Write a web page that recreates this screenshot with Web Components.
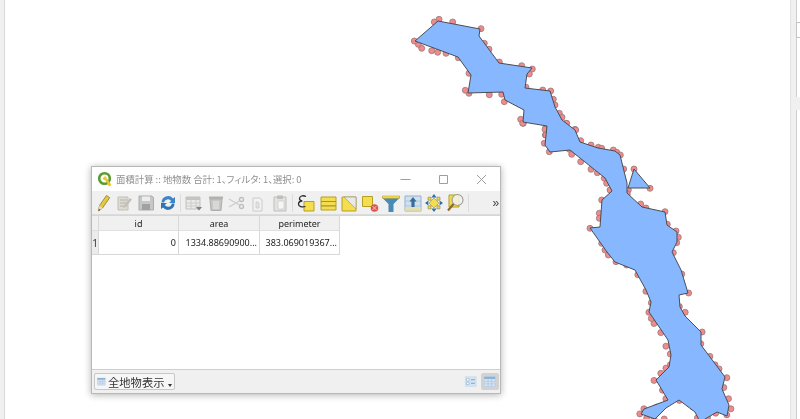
<!DOCTYPE html>
<html lang="ja">
<head>
<meta charset="utf-8">
<title>面積計算</title>
<style>
  html, body { margin: 0; height: 100%; background: #fff; overflow: hidden; }
  body { font-family: "Noto Sans CJK JP", "Noto Sans", sans-serif; }
</style>
</head>
<body>
<map-canvas>
  <attr-window title-text="面積計算 :: 地物数 合計: 1、フィルタ: 1、選択: 0">
    <attr-toolbar></attr-toolbar>
    <attr-table></attr-table>
    <attr-footer></attr-footer>
  </attr-window>
</map-canvas>

<script>
// Icons of the attribute table toolbar, all in a 20x20 box
const ICONS = {
  pencil: `<path d="M4.500 18l1-5.500L12.500 2.500l3.200 2.200L8.500 15z" fill="#e8c93c" stroke="#8f8240" stroke-width=".9"/><path d="M4.500 18l1-5.500 3 2.500z" fill="#e9dcc0"/><path d="M4.500 18l.4-2.200 1.400 1.100z" fill="#444"/>`,
  edit: `<path d="M3 4h10v13H3z" fill="#dedbd3" stroke="#c2bfb7"/><path d="M5 7h7M5 10h7M5 13h7" stroke="#b6b3ac"/><path d="M8 15l1-3 6-7 2 1.600-6 7.400z" fill="#c4c1b8"/>`,
  save: `<path d="M3 3h13l1.500 1.500V17H3z" fill="#c6c7c7" stroke="#acacac"/><path d="M6 3.500h8V8H6z" fill="#ededed"/><path d="M6 11h8v6H6z" fill="#a0a1a1"/>`,
  reload: `<path d="M3.500 9.500A6.500 6.500 0 0 1 15 5.500l2-1.500v6h-6l2.200-2A4 4 0 0 0 6 9.500z" fill="#3d85c6"/><path d="M16.500 10.500A6.500 6.500 0 0 1 5 14.500L3 16v-6h6l-2.200 2a4 4 0 0 0 7.200-1.500z" fill="#2f74b5"/>`,
  newfield: `<path d="M2 4h14v12H2z" fill="#eaeae8" stroke="#c0c0be"/><path d="M2 4h14v3H2z" fill="#c4c4c2"/><path d="M2 10h14M2 13h14M7 7v9M12 7v9" stroke="#c6c6c4" stroke-width=".8"/><path d="M12 14h6l-3 3.500z" fill="#808080"/>`,
  trash: `<path d="M4 6h12l-1 11.500H5z" fill="#c6c6c4" stroke="#aeaeac"/><path d="M3 3.500h14V6H3z" fill="#b2b2b0"/><path d="M8 8v8M10 8v8M12 8v8" stroke="#eaeae8"/>`,
  cut: `<circle cx="14.500" cy="6.500" r="2" fill="none" stroke="#bebebc" stroke-width="1.400"/><circle cx="14.500" cy="13.500" r="2" fill="none" stroke="#bebebc" stroke-width="1.400"/><path d="M2 6l10.500 6M2 14l10.500-6" stroke="#cdcdcb" stroke-width="1.400"/>`,
  copy: `<path d="M5 5h7l2 2v11H5z" fill="#f2f2f0" stroke="#cacac8"/><path d="M8 9v6h3V10l-1-1z" fill="#e2e2e0" stroke="#c6c6c4" stroke-width=".7"/>`,
  paste: `<path d="M4 4h12v14H4z" fill="#e2e2e0" stroke="#bebebc"/><path d="M7 2.500h6V6H7z" fill="#bebebc"/><path d="M8 8h6v8H8z" fill="#f6f6f4" stroke="#c8c8c6" stroke-width=".7"/>`,
  expr: `<path d="M8 8.500h10V18H8z" fill="#f5dd50" stroke="#b59f24"/><path d="M10 3.500C7 2 3.500 3 3.500 5.500c0 1.500 1.200 2.300 2.800 2.500C4 8.200 2.500 9.300 2.500 11c0 2.500 3.500 3.500 7 2.500" fill="none" stroke="#2a2a2a" stroke-width="1.300"/>`,
  selectall: `<path d="M3 4h15v13H3z" fill="#f5dd50" stroke="#b59f24"/><path d="M3 8.500h15M3 12.800h15" stroke="#a8922a" stroke-width="1.200"/>`,
  invert: `<path d="M3 4h14v14H3z" fill="#f5dd50" stroke="#b59f24"/><path d="M5 4h12v12z" fill="#e8e8e8" stroke="#999" stroke-width=".7"/>`,
  deselect: `<path d="M2.500 3.500h10v10h-10z" fill="#f5dd50" stroke="#b59f24"/><circle cx="14.500" cy="15" r="3.800" fill="#d9534f"/><path d="M12.500 13l4 4M16.500 13l-4 4" stroke="#f4c6c4"/>`,
  filter: `<path d="M1.500 3h17v2l-6 6v8h-5v-8l-6-6z" fill="#4a8ab8"/><path d="M1.500 3h17v2.300h-17z" fill="#f5dd50" stroke="#b59f24" stroke-width=".5"/>`,
  movetop: `<path d="M2 3h16v15H2z" fill="#cfe0ef" stroke="#93b1cc"/><path d="M2 14h16v4H2z" fill="#e9e09a" opacity=".7"/><path d="M2 8h16M2 13h16" stroke="#9dbbd4" stroke-width=".6"/><path d="M10 4l3.600 4.500h-2V14H8.400V8.500h-2z" fill="#3a6c99"/>`,
  pan: `<path d="M10 5l5 5-5 5-5-5z" fill="#f5dd50" stroke="#9b8b3a" stroke-width=".6"/><path d="M10 1l2.600 3.400H7.400zM10 19l-2.600-3.400h5.200zM1 10l3.400-2.600v5.200zM19 10l-3.400 2.600V7.400z" fill="#2f6ea8"/><path d="M4 4.200h3v3H4zM13 4.200h3v3h-3zM4 12.800h3v3H4zM13 12.800h3v3h-3z" fill="#f5dd50" stroke="#6e6a30" stroke-width=".5"/>`,
  zoom: `<path d="M4 2h10v12H4z" fill="#f5dd50" stroke="#b59f24"/><circle cx="12.500" cy="7" r="5.500" fill="#f2f2f0" fill-opacity=".85" stroke="#a0a09c" stroke-width="1.200"/><path d="M8.500 11L3 17.500" stroke="#8a6a30" stroke-width="2.200"/>`,
  tableview: `<path d="M1 2h17v15H1z" fill="#d6e4f2" stroke="#b3cbe2"/><path d="M1 2h17v3.600H1z" fill="#8ab3da"/><path d="M1 9.200h17M1 13h17M7 5.600V17M12.500 5.600V17" stroke="#a8c4de"/>`,
  formview: `<path d="M1 2h17v15H1z" fill="#d6e4f2" stroke="#c6d9ea"/><path d="M3 5h4v3.500H3zM3 10.500h4V14H3z" fill="#fff" stroke="#7aa5cc" stroke-width=".8"/><path d="M10 6.700h6M10 12.200h6" stroke="#7aa5cc" stroke-width="1.800"/>`
};

// Small icon, named after the ICONS table
class ToolIcon extends HTMLElement {
  connectedCallback() {
    const name = this.getAttribute("name");
    this.attachShadow({ mode: "open" });
    this.shadowRoot.innerHTML = `
      <style>
        :host { display: flex; align-items: center; justify-content: center; width: 21.33px; height: 20px; flex: none; }
        svg { width: 20px; height: 20px; display: block; }
      </style>
      <svg viewBox="0 0 20 20">${ICONS[name]}</svg>`;
  }
}

// The free canvas: lake polygon with its vertex markers, side strips of the main window
class MapCanvas extends HTMLElement {
  constructor() {
    super();
    this.attachShadow({ mode: "open" });
    const lake = [[438,21],[480,29],[479,36],[499,63],[532,68],[527,74],[525,88],[550,91],[555,107],[562,120],[575,130],[580,142],[598,148],[615,151],[620,155],[627,183],[627,193],[642,207],[665,212],[667,225],[677,232],[677,242],[672,252],[681,270],[688,293],[679,295],[680,307],[685,316],[701,332],[701,345],[725,377],[722,389],[729,405],[727,416],[717,412],[700,422],[695,412],[679,400],[666,408],[655,419],[641,414],[644,409],[668,400],[656,380],[669,367],[671,355],[668,340],[649,312],[651,302],[646,290],[635,270],[615,262],[607,252],[590,228],[600,227],[602,200],[612,191],[605,178],[570,150],[550,152],[545,145],[547,126],[523,122],[524,110],[505,100],[503,92],[468,93],[471,75],[458,57],[415,41]];
    const triangle = [[634,169],[650,188],[628,188]];
    const z5 = [[117,58],[103,66],[158,66],[243,86],[253,130],[267,148],[298,186],[365,197],[397,207],[388,222],[378,262],[428,270],[452,273],[460,298],[465,315],[478,340],[486,352],[498,370],[525,388],[438,382],[436,405],[370,370],[362,358],[313,305],[305,283],[268,284],[207,280],[196,271],[207,220],[175,173],[138,160],[113,157],[95,152],[65,145],[55,133],[43,123]];
    const z6 = [[38,10],[105,28],[108,45],[103,70],[118,95],[178,88],[185,103],[212,125],[243,148],[262,158],[283,175],[290,190],[300,210],[275,240],[268,280],[268,295],[240,325],[275,370],[285,390],[295,405],[318,425],[350,435],[170,10],[197,30],[212,62],[243,75],[265,82],[275,85],[310,90],[320,97],[331,105],[341,147],[372,147],[420,205],[355,210],[352,222],[392,252],[408,264],[465,275],[472,313],[498,333],[505,352],[500,368],[490,398]];
    const z7 = [[212,12],[232,68],[205,108],[222,125],[272,183],[268,218],[295,255],[310,280],[322,292],[345,318],[336,347],[350,380],[357,410],[345,428],[312,423],[288,436],[258,437],[245,405],[235,395],[205,385],[160,440],[130,440],[108,438],[88,425],[100,410],[138,405],[165,380],[155,355],[130,326],[150,305],[165,290],[178,280],[178,248],[165,225],[150,185],[130,158],[122,143],[115,125],[122,97],[106,63],[82,14]];
    const marks = [
      ...z5.map(p => [400 + p[0] / 3, p[1] / 3]),
      ...z6.map(p => [510 + p[0] / 3, 120 + p[1] / 3]),
      ...z7.map(p => [610 + p[0] / 2.953, 270 + p[1] / 2.953])
    ];
    const circles = marks.map(p => `<circle cx="${p[0].toFixed(1)}" cy="${p[1].toFixed(1)}" r="3"/>`).join("");
    this.shadowRoot.innerHTML = `
      <style>
        :host { display: block; position: relative; width: 800px; height: 419px; overflow: hidden; background: #fff; }
        .left { position: absolute; left: 0; top: 0; bottom: 0; width: 4px; background: #f0f0f0; border-right: 1px solid #d9d9d9; }
        .right { position: absolute; left: 790px; top: 0; bottom: 0; width: 5px; background: #f0f0f0; border-left: 1px solid #e2e2e2; border-right: 1px solid #cfcfcf; }
        .tab { position: absolute; left: 796px; top: 22px; width: 6px; height: 16px; box-sizing: border-box; border: 1px solid #c4c4c4; background: #fff; }
        .pane { position: absolute; left: 796px; top: 97px; width: 4px; height: 13px; background: #f0f0f0; }
        svg { position: absolute; left: 0; top: 0; filter: blur(.5px); }
        .lake { fill: #87b8ff; stroke: #4a4c52; stroke-width: 1; stroke-linejoin: round; }
        .marks circle { fill: #f28a8a; stroke: #95797b; stroke-width: .8; }
      </style>
      <div class="left"></div>
      <div class="right"></div>
      <div class="tab"></div>
      <div class="pane"></div>
      <svg width="800" height="419" viewBox="0 0 800 419">
        <g class="marks">${circles}</g>
        <polygon class="lake" points="${lake.join(" ")}"/>
        <polygon class="lake" points="${triangle.join(" ")}"/>
      </svg>
      <slot></slot>`;
  }
}

// Floating dialog: title bar, window buttons, then whatever is slotted
class AttrWindow extends HTMLElement {
  connectedCallback() {
    this.attachShadow({ mode: "open" });
    this.shadowRoot.innerHTML = `
      <style>
        :host { position: absolute; left: 91px; top: 166px; width: 410px; height: 228px; box-sizing: border-box;
                display: flex; flex-direction: column; background: #f0f0f0; border: 1px solid #b8b8b8;
                box-shadow: 0 1px 7px rgba(0,0,0,.3); filter: blur(.4px); }
        .title { height: 24px; flex: none; display: flex; align-items: center; background: #fff; padding-left: 5px; }
        .title svg.logo { width: 16px; height: 16px; flex: none; }
        .text { margin-left: 3px; font-size: 9.400px; color: #8f8f8f; white-space: nowrap; flex: 1; font-feature-settings: "palt"; }
        .btn { width: 38px; display: flex; justify-content: center; flex: none; }
        .btn svg { width: 11px; height: 11px; display: block; }
        .btn path { fill: none; stroke: #9e9e9e; stroke-width: 1; }
      </style>
      <div class="title">
        <svg class="logo" viewBox="0 0 16 16">
          <circle cx="7.500" cy="7.500" r="5.300" fill="none" stroke="#5a9b32" stroke-width="2.600"/>
          <path d="M7 7l3 .5L14.500 14l-2.500 1.500z" fill="#eec22e"/>
          <path d="M5.500 7.500L8 5l2 2-2.500 2.500z" fill="#f0c92f"/>
        </svg>
        <span class="text">${this.getAttribute("title-text")}</span>
        <span class="btn"><svg viewBox="0 0 11 11"><path d="M.5 5.500h10"/></svg></span>
        <span class="btn"><svg viewBox="0 0 11 11"><path d="M1.500 1.500h8v8h-8z"/></svg></span>
        <span class="btn"><svg viewBox="0 0 11 11"><path d="M1 1l9 9M10 1l-9 9"/></svg></span>
      </div>
      <slot></slot>`;
  }
}

class AttrToolbar extends HTMLElement {
  connectedCallback() {
    this.attachShadow({ mode: "open" });
    const groups = [
      ["pencil", "edit", "save", "reload"],
      ["newfield", "trash", "cut", "copy", "paste"],
      ["expr", "selectall", "invert", "deselect", "filter", "movetop", "pan", "zoom"]
    ];
    const html = groups.map(g => g.map(n => `<tool-icon name="${n}"></tool-icon>`).join("")).join(`<i class="sep"></i>`);
    this.shadowRoot.innerHTML = `
      <style>
        :host { display: flex; align-items: center; height: 24px; flex: none; padding-left: 1px; position: relative;
                background: #f0f0f0; border-bottom: 1px solid #dcdcdc; box-sizing: border-box; }
        .sep { width: 1px; height: 18px; background: #dcdcdc; margin: 0 2.150px; flex: none; }
        .more { margin-left: 21px; font: 12px "Liberation Sans", sans-serif; color: #444; letter-spacing: -.5px; }
      </style>
      ${html}<i class="sep"></i><span class="more">»</span>`;
  }
}

// Attribute table with its single feature row
class AttrTable extends HTMLElement {
  connectedCallback() {
    this.attachShadow({ mode: "open" });
    this.shadowRoot.innerHTML = `
      <style>
        :host { display: block; flex: 1; background: #fff; font: 9px "Noto Sans", "Open Sans", sans-serif; color: #222; overflow: hidden;
                border-top: 1px solid #d6d6d6; border-bottom: 1px solid #cfcfcf; }
        .grid { display: grid; grid-template-columns: 7px 80px 81px 80px; grid-auto-rows: min-content; width: max-content; }
        .h { height: 15px; background: #f0f0f0; display: flex; align-items: center; justify-content: center;
             box-sizing: border-box; border-right: 1px solid #d8d8d8; border-bottom: 1px solid #e0e0e0; }
        .h:last-child { border-right: 0; }
        .c { height: 24px; box-sizing: border-box; border-right: 1px solid #d8d8d8; border-bottom: 1px solid #d8d8d8;
             display: flex; align-items: center; justify-content: flex-end; padding: 0 2px; white-space: nowrap; }
        .n { background: #ececec; justify-content: center; padding: 0; font-size: 10px; color: #333; }
      </style>
      <div class="grid">
        <div class="h"></div><div class="h">id</div><div class="h">area</div><div class="h">perimeter</div>
        <div class="c n">1</div><div class="c">0</div><div class="c">1334.88690900...</div><div class="c">383.069019367...</div>
      </div>`;
  }
}

class AttrFooter extends HTMLElement {
  connectedCallback() {
    this.attachShadow({ mode: "open" });
    this.shadowRoot.innerHTML = `
      <style>
        :host { display: flex; align-items: center; height: 23px; flex: none; padding: 0 1px 0 2px; background: #f0f0f0; }
        .combo { width: 81px; height: 17px; box-sizing: border-box; border: 1px solid #c8c8c8; border-radius: 2px; background: #f6f6f6;
                 display: flex; align-items: center; font-size: 11.300px; color: #333; white-space: nowrap; }
        .combo tool-icon { width: 13px; height: 15px; margin-right: 0; }
        .combo tool-icon, .view tool-icon { transform: scale(.72); }
        .arrow { width: 0; height: 0; border: 2.500px solid transparent; border-top: 3px solid #333; border-bottom: 0; margin: 7px 0 0 3px; }
        .space { flex: 1; }
        .view { width: 18px; height: 17px; display: flex; align-items: center; justify-content: center; margin-left: 1px; }
        .view.on { background: #d2d2d2; border-radius: 2px; }
        .view tool-icon { width: 18px; height: 15px; }
      </style>
      <div class="combo"><tool-icon name="tableview"></tool-icon>全地物表示<i class="arrow"></i></div>
      <span class="space"></span>
      <span class="view"><tool-icon name="formview"></tool-icon></span>
      <span class="view on"><tool-icon name="tableview"></tool-icon></span>`;
  }
}

customElements.define("tool-icon", ToolIcon);
customElements.define("map-canvas", MapCanvas);
customElements.define("attr-window", AttrWindow);
customElements.define("attr-toolbar", AttrToolbar);
customElements.define("attr-table", AttrTable);
customElements.define("attr-footer", AttrFooter);
</script>
</body>
</html>
